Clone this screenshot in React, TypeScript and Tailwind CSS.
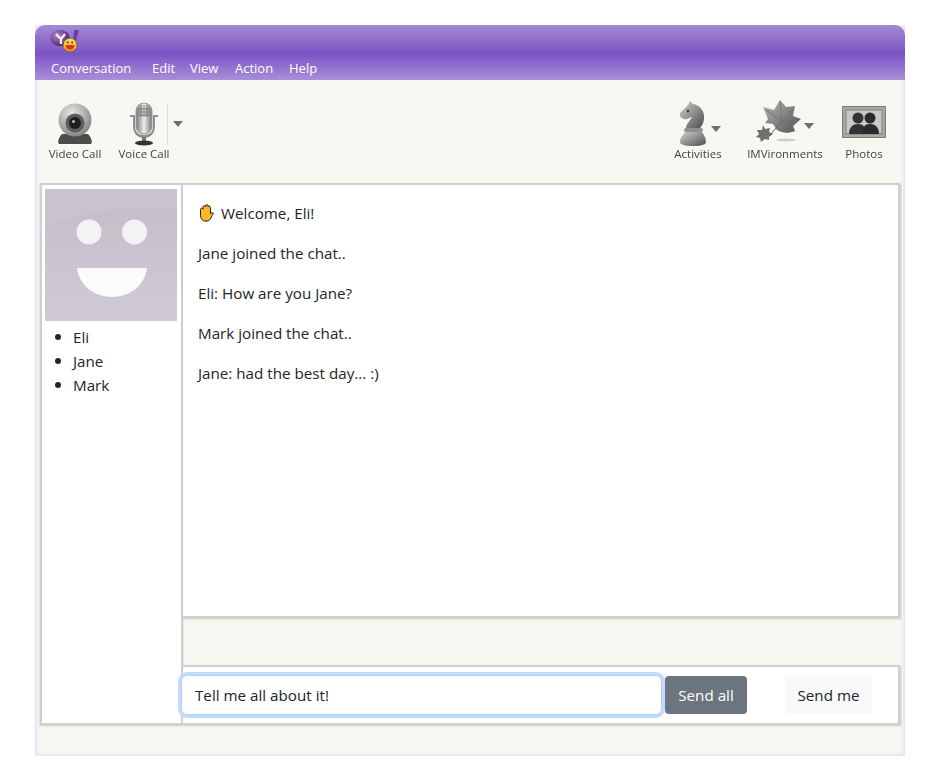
import React from "react";

const MENU_ITEMS = [
  { label: "Conversation", width: "w-[101px]" },
  { label: "Edit", width: "w-[38px]" },
  { label: "View", width: "w-[45px]" },
  { label: "Action", width: "w-[54px]" },
  { label: "Help", width: "w-[40px]" },
];

const MESSAGES = ["Jane joined the chat..", "Eli: How are you Jane?", "Mark joined the chat..", "Jane: had the best day... :)"];
const PEOPLE = ["Eli", "Jane", "Mark"];

function Caret() {
  return (
    <svg width="10" height="6" viewBox="0 0 10 6" className="shrink-0">
      <path d="M0 0h10L5 6z" fill="#6f6f6f" />
    </svg>
  );
}

function YahooLogo() {
  return (
    <svg width="31" height="24" viewBox="0 0 31 24">
      <defs>
        <radialGradient id="ymark" cx="35%" cy="35%" r="70%">
          <stop offset="0" stopColor="#b48ac8" />
          <stop offset="1" stopColor="#4a1c6e" />
        </radialGradient>
        <linearGradient id="yface" x1="0" y1="0" x2="0" y2="1">
          <stop offset="0" stopColor="#ffe45c" />
          <stop offset="1" stopColor="#f0a010" />
        </linearGradient>
      </defs>
      <ellipse cx="10" cy="9" rx="9.500" ry="8" fill="url(#ymark)" />
      <path d="M6 5l5 5 4-5M11 9v6" stroke="#f4eef8" strokeWidth="2.4" fill="none" />
      <path d="M24 1h5l-3 11h-3z" fill="#6d3f9e" />
      <circle cx="20" cy="16" r="6.800" fill="url(#yface)" stroke="#7a5a20" strokeWidth="0.6" />
      <circle cx="17.800" cy="13.500" r="0.900" fill="#333" />
      <circle cx="22.200" cy="13.500" r="0.900" fill="#333" />
      <path d="M15.500 16h9c0 3-2 4.800-4.500 4.800s-4.500-1.800-4.500-4.800z" fill="#d8342a" />
    </svg>
  );
}

function WebcamIcon() {
  return (
    <svg width="38" height="44" viewBox="0 0 38 44" className="blur-[0.4px]">
      <defs>
        <radialGradient id="camBody" cx="40%" cy="30%" r="75%">
          <stop offset="0" stopColor="#e8e8e8" />
          <stop offset="1" stopColor="#7f7f7f" />
        </radialGradient>
      </defs>
      <path d="M6 32c-3 3-5 8-3 10h32c2-2 0-7-3-10z" fill="#4d4d4d" />
      <circle cx="19" cy="18" r="16.500" fill="url(#camBody)" />
      <circle cx="19" cy="21" r="9.500" fill="#5d5d5d" />
      <circle cx="19" cy="21" r="6" fill="#1f1f1f" />
      <circle cx="17.500" cy="19.500" r="1.500" fill="#bbb" />
    </svg>
  );
}

function MicIcon() {
  return (
    <svg width="30" height="44" viewBox="0 0 30 44" className="blur-[0.4px]">
      <defs>
        <linearGradient id="micBody" x1="0" y1="0" x2="1" y2="0">
          <stop offset="0" stopColor="#777" />
          <stop offset="0.5" stopColor="#eee" />
          <stop offset="1" stopColor="#777" />
        </linearGradient>
      </defs>
      <rect x="7" y="1" width="16" height="31" rx="8" fill="url(#micBody)" stroke="#999" />
      <path d="M9 7h12M9 10h12M9 13h12M12 3v12M15 3v12M18 3v12" stroke="#666" strokeWidth="0.8" />
      <path d="M1 13h5v11c0 6 4 9 9 9s9-3 9-9V13h5v2h-3v9c0 8-5 12-11 12S4 32 4 24v-9H1z" fill="#8f8f8f" />
      <rect x="13" y="35" width="4" height="5" fill="#777" />
      <ellipse cx="15" cy="41" rx="9" ry="2.500" fill="#333" />
    </svg>
  );
}

function KnightIcon() {
  return (
    <svg width="30" height="46" viewBox="0 0 30 46" className="mr-[10px] blur-[0.4px]">
      <defs>
        <linearGradient id="knight" x1="0" y1="0" x2="1" y2="1">
          <stop offset="0" stopColor="#cfcfcf" />
          <stop offset="1" stopColor="#4f4f4f" />
        </linearGradient>
      </defs>
      <path d="M12 1l3 3c7 1 12 7 11 15-.5 4-2 7-4 9H8c0-4 4-7 6-11-3 1-6 3-8 2-3-1-5-3-4-6 3-3 6-6 8-8z" fill="url(#knight)" />
      <circle cx="10" cy="11" r="1.200" fill="#333" />
      <rect x="6" y="28" width="19" height="4" rx="2" fill="#8f8f8f" />
      <path d="M7 32h17c2 3 4 6 4 10 0 2-3 4-13 4S2 44 2 42c0-4 3-7 5-10z" fill="url(#knight)" />
    </svg>
  );
}

function LeafIcon() {
  return (
    <svg width="48" height="44" viewBox="0 0 48 44" className="mb-[3px] mr-[15px] blur-[0.4px]">
      <defs>
        <linearGradient id="leaf" x1="0" y1="0" x2="1" y2="1">
          <stop offset="0" stopColor="#b4b4b4" />
          <stop offset="1" stopColor="#545454" />
        </linearGradient>
      </defs>
      <path d="M9 8l11 3 6-10 6 7 9-1-2 10 8 3-8 7 2 5c-7 3-13 2-18-1l-4-6-8-1 3-4z" fill="url(#leaf)" />
      <path d="M12 11l16 11M26 2l2 20M40 9L28 22M44 22l-16 0" stroke="#6e6e6e" strokeWidth="0.8" />
      <path d="M9 26l2 4 5-1-1 4 4 2-4 3v3l-4-1-4 3-1-4-4-1 3-3-2-4 5 0z" fill="#707070" />
      <path d="M16 36l12-14" stroke="#666" strokeWidth="1" />
      <ellipse cx="32" cy="41" rx="10" ry="1.500" fill="#cfcfc8" />
    </svg>
  );
}

function PhotoIcon() {
  return (
    <svg width="44" height="32" viewBox="0 0 44 32" className="mb-[8px] blur-[0.4px]">
      <rect x="0.500" y="0.500" width="43" height="31" fill="#a8a8a8" stroke="#7a7a7a" />
      <rect x="4" y="4" width="36" height="24" fill="#c9c9c9" stroke="#808080" />
      <circle cx="16" cy="12" r="5.500" fill="#333" />
      <path d="M7 28c0-7 4-10 9-10s8 3 8 10z" fill="#333" />
      <circle cx="28" cy="12" r="5.500" fill="#2a2a2a" />
      <path d="M20 28c0-7 3-10 8-10s9 3 9 10z" fill="#2a2a2a" />
    </svg>
  );
}

function ToolItem({ icon, label, className }: { icon: React.ReactNode; label: string; className: string }) {
  return (
    <div className={`flex flex-col items-center ${className}`}>
      <div className="flex h-[46px] items-end justify-center">{icon}</div>
      <span className="whitespace-nowrap text-[11.5px] leading-[16px] text-[#3f3f3f] blur-[0.3px]">{label}</span>
    </div>
  );
}

function Avatar() {
  return (
    <svg width="132" height="132" viewBox="0 0 132 132" className="block">
      <defs>
        <linearGradient id="avatarBg" x1="0" y1="0" x2="0" y2="1">
          <stop offset="0" stopColor="#c4bcc9" />
          <stop offset="1" stopColor="#d0cad6" />
        </linearGradient>
      </defs>
      <rect width="132" height="132" fill="url(#avatarBg)" />
      <path d="M0 38C30 24 90 14 132 20V0H0z" fill="#cac3cf" />
      <circle cx="44" cy="43" r="12.500" fill="#f4f2f5" />
      <circle cx="89.500" cy="43" r="12.500" fill="#f4f2f5" />
      <path d="M32 79h70c-2 17-17 29-35 29S34 96 32 79z" fill="#fbfbfc" />
    </svg>
  );
}

function HandIcon() {
  return (
    <svg width="17" height="18" viewBox="0 0 17 18" className="shrink-0">
      <path
        d="M2.500 5.500c0-1.800 2.300-1.800 2.500-.2V3c0-1.700 2.400-1.700 2.500-.2V2c0-1.800 2.600-1.800 2.700 0v1c.2-1.300 2.300-1.200 2.300.5v6c.6-1 2.700-1.200 3 .2-.8 1-1.800 2.300-2.500 4-.8 2-2.300 3.500-5 3.500-3.500 0-5.500-2.500-5.500-6z"
        fill="#fbb924"
        stroke="#222"
        strokeWidth="1"
      />
    </svg>
  );
}

export default function App() {
  return (
    <div className="h-[784px] w-[943px] bg-white px-[35px] pt-[25px] font-['Open_Sans','Liberation_Sans',sans-serif] text-[15.2px] text-[#212529]">
      <div className="flex h-[731px] w-[870px] flex-col border-x border-b border-[#ecdff8] bg-[#f8f8f2] shadow-[inset_0_0_4px_#e6d8f5]">
        {/* title bar and menu */}
        <div className="-mx-px h-[55px] rounded-t-[10px] bg-[linear-gradient(180deg,#a48bd2_0%,#7b53c4_52%,#a88fd9_100%)]">
          <div className="h-[30px] pl-[15px] pt-[4px]">
            <YahooLogo />
          </div>
          <div className="flex pl-[16px] text-[13px] leading-[26px] text-white">
            {MENU_ITEMS.map((item) => (
              <span key={item.label} className={`whitespace-nowrap ${item.width}`}>
                {item.label}
              </span>
            ))}
          </div>
        </div>

        {/* toolbar */}
        <div className="flex h-[103px] items-start pt-[20px]">
          <ToolItem icon={<WebcamIcon />} label="Video Call" className="ml-[10px] w-[58px]" />
          <ToolItem icon={<MicIcon />} label="Voice Call" className="ml-[11px] w-[58px]" />
          <div className="ml-[-6px] mt-[3px] flex h-[42px] items-center border-l border-[#ddddd6] pl-[5px]">
            <Caret />
          </div>
          <ToolItem icon={<KnightIcon />} label="Activities" className="ml-auto w-[54px]" />
          <div className="ml-[-14px] mt-[26px]">
            <Caret />
          </div>
          <ToolItem icon={<LeafIcon />} label="IMVironments" className="ml-[25px] w-[78px]" />
          <div className="ml-[-20px] mt-[23px]">
            <Caret />
          </div>
          <ToolItem icon={<PhotoIcon />} label="Photos" className="ml-[26px] mr-[16px] w-[48px]" />
        </div>

        {/* main area */}
        <div className="mx-[4px] flex h-[542px]">
          <aside className="w-[143px] shrink-0 border-2 border-[#cfcfcf] bg-white shadow-[0_1px_2px_rgba(0,0,0,0.2)]">
            <div className="pl-[3px] pt-[4px]">
              <Avatar />
            </div>
            <ul className="mt-[4px] pl-[13px] leading-[24px]">
              {PEOPLE.map((name) => (
                <li key={name} className="flex items-center gap-[12px]">
                  <span className="h-[6px] w-[6px] shrink-0 rounded-full bg-[#212529]" />
                  {name}
                </li>
              ))}
            </ul>
          </aside>

          <div className="flex min-w-0 flex-1 flex-col">
            <div className="h-[435px] border-b-2 border-r-2 border-t-2 border-[#cfcfcf] bg-white pl-[15px] pt-[16px] shadow-[1px_1px_2px_rgba(0,0,0,0.2)]">
              <p className="mb-[16px] flex items-center gap-[6px] leading-[24px]">
                <HandIcon />
                Welcome, Eli!
              </p>
              {MESSAGES.map((message) => (
                <p key={message} className="mb-[16px] leading-[24px]">
                  {message}
                </p>
              ))}
            </div>
            <div className="h-[47px]" />
            <div className="flex h-[60px] items-center border-y-2 border-r-2 border-[#cfcfcf] bg-white shadow-[1px_1px_2px_rgba(0,0,0,0.2)]">
              <div className="-ml-[2px] flex h-[40px] w-[481px] items-center rounded-[6px] border border-[#b5d0fb] bg-white pl-[13px] shadow-[0_0_0_3px_#c2dbfe]">
                Tell me all about it!
              </div>
              <button className="ml-[3px] h-[38px] w-[82px] rounded-[4px] bg-[#6c757d] text-white">Send all</button>
              <button className="ml-[38px] h-[38px] w-[87px] rounded-[4px] bg-[#f8f9fa] text-[#212529]">Send me</button>
            </div>
          </div>
        </div>
      </div>
    </div>
  );
}
